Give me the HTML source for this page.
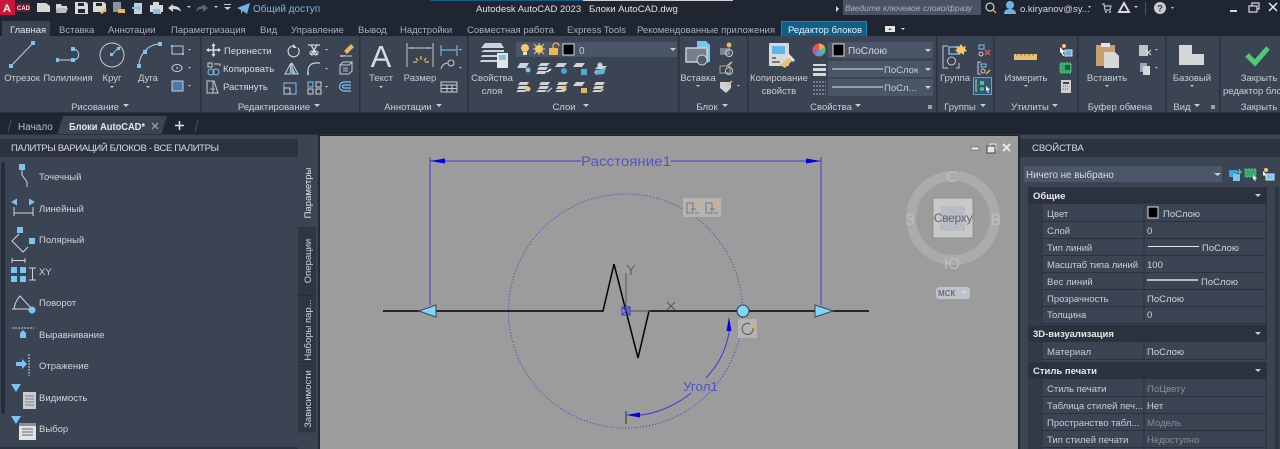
<!DOCTYPE html>
<html lang="ru"><head><meta charset="utf-8"><title>AutoCAD</title>
<style>
html,body{margin:0;padding:0;background:#1f2631;width:1280px;height:449px;overflow:hidden}
svg{display:block;position:absolute;left:0;top:0}
text{font-family:"Liberation Sans",sans-serif;font-size:9.5px;fill:#d0d4da}
.m{text-anchor:middle}
.h{fill:#c9cdd3}
.b{font-weight:bold;fill:#e6e8eb}
.g{fill:#878d97}
.c{fill:#7cc4f0}
.w{fill:#d8d8d8}
.o{fill:#e9b65a}
.dr{fill:#c9cdd3}
</style></head><body>
<svg width="1280" height="449" viewBox="0 0 1280 449" xmlns="http://www.w3.org/2000/svg">
<rect width="1280" height="449" fill="#1f2631"/>
<!-- title bar -->
<rect x="0" y="0" width="15" height="15" fill="#c8163c"/><rect x="15" y="3" width="15" height="9" fill="#7d1030"/>
<text x="3" y="12" style="font-size:11px;font-weight:bold;fill:#fff">A</text>
<text x="17" y="10" style="font-size:6px;font-weight:bold;fill:#eee">CAD</text>
<path class="w" d="M37 3h9l4 3v6H37z"/>
<path class="w" d="M56 4h5l1 2h5v2h-9l-2 4z"/><path d="M58 8h10l-2 5H56z" fill="#b9bcc0"/>
<path class="w" d="M75 2h11l2 2v10H75z"/><rect x="78" y="3" width="6" height="3" fill="#1f2631"/><rect x="78" y="9" width="7" height="4" fill="#1f2631"/>
<path class="w" d="M93 2h11l2 2v8H93z"/><rect x="96" y="3" width="6" height="3" fill="#1f2631"/><path d="M100 13l5-5 2 2-5 4z" class="o"/>
<path d="M113 2h8v10h-8z" fill="#8d929a"/><path d="M118 9h7v4h-7z" class="o"/>
<path d="M134 3h8v11h-8z" fill="#c9ccd0"/><path d="M132 7h6v-2l3 3-3 3V9h-6z" class="c"/>
<path d="M153 2h6v3h-6zM150 5h13v7h-2v2h-8v-2h-3z" class="w"/><rect x="153" y="9" width="7" height="5" fill="#7cc4f0"/>
<path d="M168 8l5-4v2c4 0 7 1 8 6-2-2-4-3-8-3v3z" fill="#d8d8d8"/>
<path d="M187 6h4l-2 2z" fill="#ccc"/>
<path d="M208 8l-5-4v2c-4 0-6 1-7 6 2-2 3-3 7-3v3z" fill="#5d646f"/>
<path d="M214 6h4l-2 2z" fill="#ccc"/>
<path d="M224 4h7v1h-7zM224 7h7l-3.500 3z" fill="#ccc"/>
<path d="M237 8l13-5-3 11-4-3-2 3v-4z" fill="#6fb3e0"/>
<text x="253" y="12" style="fill:#7fb6de;font-size:10px">Общий доступ</text>
<rect x="430" y="0" width="153" height="1" fill="#0e5d8a"/><rect x="583" y="0" width="150" height="1" fill="#d0d0d0"/>
<text x="476" y="12" style="font-size:9.5px;fill:#dfe2e6">Autodesk AutoCAD 2023</text>
<text x="589" y="12" style="font-size:9.5px;fill:#dfe2e6">Блоки AutoCAD.dwg</text>
<path d="M836 6l3 3-3 3z" fill="#ddd"/>
<rect x="843" y="0" width="138" height="15" fill="#4a5363"/>
<text x="845" y="11" textLength="127" style="font-size:8.5px;font-style:italic;fill:#aab0b9">Введите ключевое слово/фразу</text>
<circle cx="990" cy="7" r="4" fill="none" stroke="#c9cdd3" stroke-width="1.200"/><path d="M993 10l3 3" stroke="#d9a75a" stroke-width="1.500"/>
<circle cx="1010" cy="5" r="4" fill="#6fb3e0"/><path d="M1004 14c0-4 3-5 6-5s6 1 6 5z" fill="#6fb3e0"/>
<text x="1020" y="12" style="font-size:9.5px;fill:#d5d8dc">o.kiryanov@sy...</text>
<path d="M1088 6h3l-1.500 2z" fill="#ccc"/>
<path d="M1102 4h2l1 6h5l1-4h-6" fill="none" stroke="#b9bdc3" stroke-width="1.200"/><circle cx="1106" cy="12" r="1" fill="#b9bdc3"/><circle cx="1110" cy="12" r="1" fill="#b9bdc3"/>
<path d="M1124 3l5 9h-10z" fill="none" stroke="#d5d8dc" stroke-width="2"/><path d="M1134 6h4l-2 2z" fill="#ccc"/>
<rect x="1145" y="2" width="1" height="13" fill="#4b5563"/>
<circle cx="1160" cy="8" r="6" fill="#c9cdd3"/><text x="1160" y="11.500" class="m b" style="fill:#333;font-size:9.5px">?</text>
<path d="M1171 7h3l-1.500 2z" fill="#ccc"/>
<rect x="1230" y="10" width="7" height="2" fill="#d5d8dc"/>
<path d="M1249 6h8v6h-8zM1252 6V3h7v6h-2" fill="none" stroke="#d5d8dc" stroke-width="1.200"/>
<path d="M1269 3l8 8M1277 3l-8 8" stroke="#e6e8eb" stroke-width="1.500"/>
<!-- ribbon tabs -->
<rect x="2" y="21" width="48" height="15" fill="#3b4453"/>
<text x="10" y="33" style="fill:#e0e2e5">Главная</text>
<text x="59" y="33" style="fill:#a9aeb6">Вставка</text>
<text x="108" y="33" style="fill:#a9aeb6">Аннотации</text>
<text x="171" y="33" style="fill:#a9aeb6">Параметризация</text>
<text x="260" y="33" style="fill:#a9aeb6">Вид</text>
<text x="291" y="33" style="fill:#a9aeb6">Управление</text>
<text x="358" y="33" style="fill:#a9aeb6">Вывод</text>
<text x="400" y="33" style="fill:#a9aeb6">Надстройки</text>
<text x="467" y="33" style="fill:#a9aeb6">Совместная работа</text>
<text x="567" y="33" style="fill:#a9aeb6">Express Tools</text>
<text x="637" y="33" style="fill:#a9aeb6">Рекомендованные приложения</text>
<rect x="781.500" y="21.500" width="85" height="15" fill="#0f5f88" stroke="#1c86b8"/>
<text x="788" y="33" style="fill:#e6eef3">Редактор блоков</text>
<rect x="885" y="26" width="10" height="6" fill="#e6e6e6"/><path d="M888 30h4l-2-2z" fill="#555"/><path d="M901 28h4l-2 2z" fill="#ddd"/>
<!-- ribbon -->
<rect x="0" y="36" width="1280" height="77" fill="#3b4453"/>
<rect x="0" y="112" width="1280" height="1" fill="#2a313c"/>
<g fill="#2b323e">
<rect x="200" y="36" width="1.500" height="77"/><rect x="359" y="36" width="1.500" height="77"/><rect x="467" y="36" width="1.500" height="77"/><rect x="678" y="36" width="1.500" height="77"/><rect x="747" y="36" width="1.500" height="77"/><rect x="936" y="36" width="1.500" height="77"/><rect x="993" y="36" width="1.500" height="77"/><rect x="1077" y="36" width="1.500" height="77"/><rect x="1165" y="36" width="1.500" height="77"/><rect x="1219" y="36" width="1.500" height="77"/>
</g>
<!-- draw -->
<path d="M11 66L33 43" stroke="#c9cdd3"/><rect x="9" y="64" width="4" height="4" class="c"/><rect x="31" y="41" width="4" height="4" class="c"/>
<path d="M58 60h15M73 49c7 0 8 11 0 11" stroke="#d0d4da" fill="none"/><rect x="56" y="58" width="3" height="4" class="c"/><rect x="71" y="58" width="4" height="4" class="c"/><rect x="71" y="47" width="4" height="4" class="c"/>
<circle cx="112" cy="55" r="12" fill="none" stroke="#c9cdd3"/><path d="M112 55l6-7" stroke="#7cc4f0"/><rect x="110" y="53" width="3" height="3" class="c"/><rect x="117" y="47" width="3" height="3" class="c"/>
<path d="M139 65c1-12 10-21 21-21" fill="none" stroke="#c9cdd3"/><rect x="137" y="64" width="4" height="4" class="c"/><rect x="143" y="50" width="4" height="4" class="c"/><rect x="158" y="42" width="4" height="4" class="c"/>
<text x="22" y="81" class="m h">Отрезок</text><text x="68" y="81" class="m h">Полилиния</text><text x="112" y="81" class="m h">Круг</text><text x="148" y="81" class="m h">Дуга</text>
<path d="M110 86h4l-2 2zM146 86h4l-2 2z" class="dr"/>
<rect x="172" y="46" width="11" height="8" fill="none" stroke="#c9cdd3"/><rect x="171" y="45" width="2" height="2" class="c"/><rect x="182" y="53" width="2" height="2" class="c"/>
<ellipse cx="177" cy="68" rx="5" ry="3.500" fill="none" stroke="#c9cdd3"/><circle cx="177" cy="68" r="1" class="c"/>
<rect x="172" y="81" width="11" height="10" fill="#4f79ac" stroke="#c9cdd3"/>
<path d="M188 49h3l-1.500 1.500zM188 67h3l-1.500 1.500zM188 85h3l-1.500 1.500z" class="dr"/>
<text x="95" y="110" class="m h">Рисование</text><path d="M123 104h6l-3 3z" class="dr"/>
<!-- edit -->
<path d="M208 50h11M213.500 45v11" stroke="#ddd" stroke-width="1.500"/><path d="M213.500 43l-2 3h4zM213.500 57l-2-3h4zM206 50l3-2v4zM221 50l-3-2v4z" fill="#e4e4e4"/>
<rect x="208" y="63" width="4" height="4" fill="none" stroke="#ccc"/><path d="M214 64h6v2" fill="none" stroke="#ccc"/><circle cx="211" cy="72" r="3" fill="none" stroke="#7cc4f0"/><circle cx="216" cy="72" r="3" fill="none" stroke="#7cc4f0"/>
<path d="M207 81h7l4 12h-11zM213 81v12" fill="none" stroke="#ccc"/><path d="M210 89h5" stroke="#7cc4f0"/>
<text x="224" y="54" style="fill:#d8dbdf">Перенести</text><text x="223" y="72" style="fill:#d8dbdf">Копировать</text><text x="223" y="90" style="fill:#d8dbdf">Растянуть</text>
<path d="M295 46a5.500 5.500 0 1 0 3 2" fill="none" stroke="#d0d4da" stroke-width="1.200"/><path d="M293 44v4h4z" fill="#d0d4da"/>
<path d="M291 63l-6 11h5zM292 63l6 11h-6z" fill="none" stroke="#d0d4da"/><path d="M292 66l4 8h-4z" class="c"/>
<rect x="284" y="83" width="12" height="11" fill="none" stroke="#7cc4f0"/><rect x="284" y="88" width="6" height="6" fill="none" stroke="#d0d4da"/>
<path d="M308 45h12M311 45l6 10M317 45l-6 10" stroke="#d0d4da" stroke-width="1.300"/><circle cx="312" cy="53" r="2" fill="none" stroke="#e4e4e4"/><circle cx="316" cy="53" r="2" fill="none" stroke="#e4e4e4"/>
<path d="M308 75v-4c0-5 3-8 8-8h4" fill="none" stroke="#d0d4da" stroke-width="1.200"/><rect x="307" y="72" width="2" height="3" class="c"/>
<rect x="308" y="82" width="5" height="5" fill="none" stroke="#7cc4f0"/><rect x="316" y="82" width="5" height="5" fill="none" stroke="#d0d4da"/><rect x="308" y="89" width="5" height="5" fill="none" stroke="#d0d4da"/><rect x="316" y="89" width="5" height="5" fill="none" stroke="#d0d4da"/>
<path d="M325 49h3l-1.500 1.500zM325 68h3l-1.500 1.500zM325 86h3l-1.500 1.500z" class="dr"/>
<path d="M344 51l7-7 3 3-7 7z" class="o"/><path d="M340 55h5l-1 2h-4z" fill="#e05a4e"/><path d="M340 56h12" stroke="#ccc"/>
<path d="M340 65h9l3-3v9l-3 3h-9zM340 65l3-3h9" fill="none" stroke="#c9cdd3"/><rect x="343" y="67" width="5" height="5" fill="#7cc4f0" opacity=".5"/>
<path d="M351 82h-7a4 4 0 0 0 0 9h7M351 85h-7a1.500 1.500 0 0 0 0 3h7" fill="none" stroke="#7cc4f0" stroke-width="1.200"/>
<text x="274" y="110" class="m h">Редактирование</text><path d="M314 104h6l-3 3z" class="dr"/>
<!-- annotations -->
<text x="381" y="67" class="m" style="font-size:31px;fill:#d9dbde">A</text>
<text x="381" y="81" class="m h">Текст</text><path d="M379 86h4l-2 2z" class="dr"/>
<path d="M407 43v24M433 43v24" stroke="#c9cdd3"/><path d="M408 48h24" stroke="#c9cdd3"/><path d="M409 48l3-1v2zM431 48l-3-1v2z" fill="#ccc"/>
<path d="M413 62h4M416 58l2 3M421 56v4M426 58l-2 3M429 62h-4" stroke="#e9b65a" stroke-width="1.300"/>
<text x="420" y="81" class="m h">Размер</text>
<path d="M441 45v11M457 45v11M441 50h16" stroke="#6fb3e0" stroke-width="1.200"/>
<path d="M441 69c1-4 3-6 7-6" fill="none" stroke="#c9cdd3"/><circle cx="451" cy="63" r="3" fill="none" stroke="#c9cdd3"/>
<path d="M441 82h16v10h-16zM441 85h16M441 88.500h16M447 85v7M452 85v7" fill="none" stroke="#c9cdd3"/>
<path d="M459 49h3l-1.500 1.500zM459 67h3l-1.500 1.500z" class="dr"/>
<text x="408" y="110" class="m h">Аннотации</text><path d="M436 104h6l-3 3z" class="dr"/>
<!-- layers -->
<path d="M485 43h16l3 5h-18l-5 0zM484 50h20v2h-23zM482 55h20v2h-21zM481 60h20v2h-21z" fill="#cfd2d6"/>
<rect x="497" y="53" width="11" height="15" fill="#e2e4e6"/><rect x="499" y="55" width="7" height="5" class="c"/>
<text x="492" y="81" class="m h">Свойства</text><text x="492" y="94" class="m h">слоя</text>
<rect x="516" y="42" width="161" height="15" fill="#4a5568"/>
<circle cx="525" cy="48" r="4" fill="#f3c969"/><rect x="523" y="52" width="4" height="3" fill="#ddd"/>
<circle cx="539" cy="49" r="4" fill="#f3c969"/><path d="M534 44l10 10M544 44l-10 10M533 49h12M539 43v12" stroke="#f3c969"/>
<rect x="549" y="48" width="9" height="7" class="o"/><path d="M553 48v-2a3 3 0 0 1 6 0" fill="none" stroke="#e9b65a" stroke-width="1.300"/>
<rect x="563" y="44" width="11" height="11" fill="#000" stroke="#ddd"/>
<text x="579" y="54" style="fill:#c9cdd3;font-size:10px">0</text>
<path d="M670 48h6l-3 3z" class="dr"/>
<g fill="#cfd2d6">
<path d="M520 63h9l-3 5h-9z"/><path d="M541 63h9l-3 3h-9zM539 67h9l-2 3h-9zM538 71h9l-2 3h-9z"/><path d="M558 63h9l-3 4h-9z"/><path d="M576 63h9l-3 4h-9z"/><path d="M598 66h9l-3 3h-9zM596 70h9l-2 3h-9z"/>
<path d="M520 82h9l-2 3h-9zM519 86h9l-2 3h-9zM518 90h9l-2 2h-9z"/><path d="M541 82h9l-2 3h-9zM540 86h9l-2 3h-9zM538 90h9l-2 2h-9z"/><path d="M559 82h9l-2 3h-9zM558 86h9l-2 3h-9zM557 90h9l-2 2h-9z"/><path d="M576 82h9l-3 4h-9z"/><path d="M596 82h9l-2 3h-9zM595 86h9l-2 3h-9zM594 90h9l-2 2h-9z"/>
</g>
<circle cx="528" cy="70" r="2.500" class="c"/><path d="M547 72l4-3" stroke="#fff" stroke-width="1.500"/><circle cx="564" cy="71" r="3" fill="#45a6d8"/><rect x="581" y="69" width="6" height="6" fill="#55a9d8"/><circle cx="600" cy="65" r="2.500" fill="#cfd2d6"/><path d="M597 70l9-2-2 6-9 1z" fill="#5fb0de"/>
<circle cx="528" cy="89" r="2.500" fill="#f3c969"/><path d="M547 92l5-4" stroke="#7cc4f0" stroke-width="1.500"/><circle cx="564" cy="89" r="2.500" fill="#f3c969"/><rect x="581" y="88" width="6" height="5" class="o"/><path d="M601 87l3 3-3 2z" class="o"/>
<text x="564" y="110" class="m h">Слои</text><path d="M583 104h6l-3 3z" class="dr"/>
<!-- block -->
<path d="M697 41h9l4 4v17h-13z" fill="#7cc4f0"/>
<rect x="686" y="48" width="21" height="14" fill="#777e89" stroke="#c9cdd3" stroke-width="1.500"/><circle cx="702" cy="60" r="5" fill="#555c67" stroke="#c9cdd3"/>
<text x="698" y="81" class="m h">Вставка</text><path d="M696 85h4l-2 2z" class="dr"/>
<rect x="720" y="48" width="10" height="7" fill="#7d848e"/><circle cx="729" cy="53" r="3.500" fill="none" stroke="#ccc"/><circle cx="729" cy="45" r="2.500" class="o"/>
<rect x="720" y="66" width="10" height="7" fill="none" stroke="#aaa"/><circle cx="729" cy="71" r="3.500" fill="none" stroke="#ccc"/><path d="M727 66l5-4" stroke="#e9b65a" stroke-width="1.500"/>
<path d="M720 82h11v6l-5 5-6-5z" fill="#d0d2d5"/><path d="M727 86l5-5" stroke="#e9b65a" stroke-width="1.500"/>
<path d="M737 85h3l-1.500 1.500z" class="dr"/>
<text x="707" y="110" class="m h">Блок</text><path d="M722 104h6l-3 3z" class="dr"/>
<!-- match -->
<rect x="769" y="43" width="20" height="23" rx="1" fill="#d6d8da"/><rect x="772" y="46" width="13" height="8" fill="#5fb5e8"/>
<rect x="772" y="57" width="4" height="2" fill="#777"/><rect x="772" y="61" width="8" height="2" fill="#777"/>
<path d="M780 65l9-7 3 3-7 7z" fill="#e9c271"/><path d="M787 56l6 6 2-2-6-6z" fill="#e6e6e6"/>
<text x="779" y="81" class="m h">Копирование</text><text x="779" y="94" class="m h">свойств</text>
<!-- properties -->
<circle cx="819" cy="50" r="6.500" fill="#e05a4e"/><path d="M819 50V43.500a6.500 6.500 0 0 1 6 4z" fill="#f1a93c"/><path d="M819 50l6-2.500a6.500 6.500 0 0 1-2 7z" fill="#4cc38a"/><path d="M819 50l4 4.500a6.500 6.500 0 0 1-8 .5z" fill="#4a9fe0"/><path d="M819 50l-4 5a6.500 6.500 0 0 1-2-5z" fill="#a060c0"/>
<path d="M813 64h13v2h-13zM813 68h13v3h-13zM813 73h13v3h-13z" fill="#d5d8dc"/>
<path d="M813 82h13M813 86h13M813 90h13M813 94h13" stroke="#aeb2b8" stroke-dasharray="2 1"/>
<rect x="828" y="42" width="105" height="16" fill="#4a5568"/><rect x="828" y="61" width="105" height="16" fill="#4a5568"/><rect x="828" y="79" width="105" height="17" fill="#4a5568"/>
<rect x="833" y="44" width="11" height="12" fill="#000" stroke="#ddd"/>
<text x="848" y="54" style="fill:#d8dbdf;font-size:10px">ПоСлою</text>
<path d="M832 69h51M832 87h51" stroke="#e0e2e5"/>
<text x="884" y="73" style="fill:#c9cdd3">ПоСлою</text><text x="884" y="91" style="fill:#c9cdd3">ПоСл...</text>
<rect x="918" y="61" width="15" height="16" fill="#4a5568"/>
<path d="M925 49h6l-3 3zM925 68h6l-3 3zM925 86h6l-3 3z" class="dr"/>
<text x="831" y="110" class="m h">Свойства</text><path d="M855 104h6l-3 3z" class="dr"/>
<path d="M928 105h4v4h-4z" fill="#9ba0a8"/>
<!-- groups -->
<path d="M948 46h-5v22h5" fill="none" stroke="#c9cdd3"/><path d="M959 63v5h-3" fill="none" stroke="#c9cdd3"/>
<rect x="949" y="47" width="9" height="7" fill="none" stroke="#7cc4f0" stroke-width="1.300"/><circle cx="951.500" cy="61" r="4" fill="none" stroke="#c9cdd3"/>
<path d="M961 44l2 3 3-1-1 3 2 2-3 1 0 3-3-2-2 2-1-3-3-1 2-2-1-3 3 1z" fill="#f3c969"/>
<text x="955" y="81" class="m h">Группа</text>
<rect x="979" y="45" width="5" height="4" fill="none" stroke="#7cc4f0"/><circle cx="981" cy="54" r="2" fill="none" stroke="#ccc"/><path d="M985 50l5 5M990 50l-5 5" stroke="#e05a4e" stroke-width="1.500"/>
<path d="M981 62h-3v12h3" fill="none" stroke="#ccc"/><rect x="981" y="64" width="5" height="3" fill="none" stroke="#7cc4f0"/><circle cx="983" cy="71" r="2" fill="none" stroke="#ccc"/><path d="M986 74l4-4" stroke="#e9b65a" stroke-width="1.500"/>
<rect x="973.500" y="77.500" width="18" height="17" fill="#32566f" stroke="#5ca4d0"/><rect x="980" y="81" width="4" height="4" fill="#4cc38a"/><circle cx="982" cy="89" r="2" fill="#4cc38a"/><path d="M977 80h-1v11h1" fill="none" stroke="#ccc"/><path d="M986 86l4 4-2 0 1 3-1 0-1-3-1 1z" fill="#fff"/>
<text x="960" y="110" class="m h">Группы</text><path d="M980 104h6l-3 3z" class="dr"/>
<!-- utilities -->
<rect x="1014" y="54" width="23" height="6" fill="#e9c271"/><path d="M1017 54v2M1021 54v2M1025 54v2M1029 54v2M1033 54v2" stroke="#8a6f3c"/>
<text x="1026" y="81" class="m h">Измерить</text><path d="M1024 85h4l-2 2z" class="dr"/>
<path d="M1060 47l5 5-2 0 1 4-1 0-2-4-1 1z" fill="#fff"/><rect x="1065" y="50" width="7" height="6" fill="#5fb0de" stroke="#ddd"/><circle cx="1064" cy="46" r="2" fill="#f3c969"/>
<rect x="1060" y="63" width="11" height="10" fill="#3da66a" stroke="#4cc38a" stroke-dasharray="2 1"/><rect x="1065" y="65" width="5" height="5" fill="#1d5f40"/>
<rect x="1061" y="80" width="10" height="13" fill="#ccd0d4"/><rect x="1063" y="82" width="6" height="2" fill="#444"/><path d="M1063 86h6M1063 89h6" stroke="#666" stroke-dasharray="1 1"/>
<text x="1030" y="110" class="m h">Утилиты</text><path d="M1052 104h6l-3 3z" class="dr"/>
<!-- clipboard -->
<rect x="1096" y="45" width="19" height="21" fill="#c9a16f"/><rect x="1101" y="43" width="9" height="4" fill="#e4e4e4"/>
<path d="M1104 52h11l4 4v12h-15z" fill="#d8d8d8"/>
<text x="1107" y="81" class="m h">Вставить</text><path d="M1105 85h4l-2 2z" class="dr"/>
<rect x="1139" y="45" width="9" height="11" fill="#c0c4c9"/><path d="M1146 50l5 5M1151 50l-5 5" stroke="#ddd"/>
<rect x="1140" y="63" width="7" height="9" fill="#a0a5ac"/><rect x="1143" y="66" width="7" height="9" fill="#d8d8d8"/>
<path d="M1155 49h3l-1.500 1.500zM1155 67h3l-1.500 1.500z" class="dr"/>
<text x="1120" y="110" class="m h">Буфер обмена</text>
<!-- view -->
<path d="M1179 45h13v9h12v11h-25z" fill="#d5d6d8"/>
<text x="1192" y="81" class="m h">Базовый</text><path d="M1190 85h4l-2 2z" class="dr"/>
<text x="1182" y="110" class="m h">Вид</text><path d="M1194 104h6l-3 3z" class="dr"/><path d="M1211 105h4v4h-4z" fill="#9ba0a8"/>
<!-- close -->
<path d="M1247 55l8 8 13-15" fill="none" stroke="#4ecb79" stroke-width="5"/>
<text x="1259" y="81" class="m h">Закрыть</text><text x="1223" y="94" class="h">редактор бло</text><text x="1259" y="110" class="m h">Закрыть</text>
<!-- doc tabs -->
<path d="M8 132l3-12M195 132l3-12" stroke="#4b5563"/>
<text x="18" y="130" style="fill:#b9bdc3;font-size:10px">Начало</text>
<path d="M57 135l6-19h104l-6 19z" fill="#3b4453"/>
<text x="69" y="130" class="b" textLength="76" lengthAdjust="spacingAndGlyphs" style="font-size:10px">Блоки AutoCAD*</text>
<path d="M152 123l6 6M158 123l-6 6" stroke="#9ba0a8" stroke-width="1.300"/>
<path d="M175 125.500h9M179.500 121v9" stroke="#e0e2e5" stroke-width="1.500"/>
<rect y="134" width="1280" height="1" fill="#2b323e"/>
<!-- left palette -->
<rect x="0" y="135" width="318" height="314" fill="#3b4453"/>
<rect x="0" y="139" width="298" height="18" fill="#2c333f"/>
<rect x="0" y="447" width="298" height="2" fill="#2c333f"/>
<rect x="1" y="162" width="4" height="252" rx="2" fill="#262d38"/>
<text x="11" y="151" textLength="208" style="font-size:9.5px;fill:#d8dbdf">ПАЛИТРЫ ВАРИАЦИЙ БЛОКОВ - ВСЕ ПАЛИТРЫ</text>
<rect x="298" y="227" width="18" height="68" fill="#2f3642"/><rect x="298" y="295.500" width="18" height="69" fill="#2f3642"/><rect x="298" y="365.500" width="18" height="67" fill="#2f3642"/>
<path d="M298 295.500h18M298 365.500h18" stroke="#262d38"/>
<text transform="translate(311 193) rotate(-90)" class="m" style="fill:#e0e2e5">Параметры</text>
<text transform="translate(311 261) rotate(-90)" class="m">Операции</text>
<text transform="translate(311 330) rotate(-90)" class="m">Наборы пар...</text>
<text transform="translate(311 399) rotate(-90)" class="m">Зависимости</text>
<text x="39" y="180">Точечный</text><text x="39" y="212">Линейный</text><text x="39" y="243">Полярный</text><text x="39" y="275">XY</text><text x="39" y="306">Поворот</text><text x="39" y="338">Выравнивание</text><text x="39" y="369">Отражение</text><text x="39" y="401">Видимость</text><text x="39" y="432">Выбор</text>
<rect x="19" y="164" width="6" height="6" class="c"/><path d="M22 170v5l5 7v5" fill="none" stroke="#d0d4da"/>
<path d="M11 202l6-3.500v7zM35 202l-6-3.500v7z" class="c"/><path d="M14 207v9M33 207v9M14 213h19" fill="none" stroke="#d0d4da"/>
<rect x="17" y="227" width="6" height="6" class="c"/><rect x="29" y="238" width="6" height="6" class="c"/><path d="M19 234l-7 7 11 11 5-5" fill="none" stroke="#d0d4da"/>
<path d="M12 258v5M25 258v5M12 260.500h13" stroke="#d0d4da"/>
<rect x="11" y="267" width="6" height="6" class="c"/><rect x="20" y="267" width="6" height="6" class="c"/><rect x="11" y="276" width="6" height="6" class="c"/><rect x="20" y="276" width="6" height="6" class="c"/>
<path d="M29 268h7M29 280h7M32.500 268v12" stroke="#d0d4da"/>
<path d="M14 309c1-6 3-10 6-13l12 13" fill="none" stroke="#d0d4da"/><path d="M12 309h18" stroke="#d0d4da"/><circle cx="32" cy="310" r="3.500" class="c"/>
<path d="M12 328h22" stroke="#d0d4da" stroke-dasharray="2 1"/><path d="M20 338v-5l3-3 3 3v5z" class="c"/>
<path d="M29 354v22" stroke="#d0d4da" stroke-dasharray="2 1"/><path d="M16 362h6v-3l5 5-5 5v-3h-6z" class="c"/>
<path d="M11 384h10l-5 8z" class="c"/><rect x="23" y="392" width="13" height="17" fill="#c9ccd0"/><path d="M25 396h9M25 399h9M25 402h9M25 405h9" stroke="#7b8087"/>
<path d="M11 416h10l-5 8z" class="c"/><rect x="19" y="423" width="17" height="17" fill="#e0e2e4"/><rect x="19" y="423" width="17" height="3" fill="#8c9198"/><path d="M22 429h11M22 432h11M22 435h11" stroke="#666"/>
<!-- canvas -->
<rect x="320" y="136" width="698" height="313" fill="#9c9c9c"/>
<g fill="none" stroke="#3a3ad8">
<path d="M430 157V305M821 157V305"/>
<path d="M430 161H581M671 161H821"/>
<path d="M730 327C726 355 715 368 706 378M691 393C677 405 655 414 640 415"/>
<path d="M626 411v13" stroke="#333"/>
</g>
<path d="M430 161l15-2.500v5zM821 161l-15-2.500v5zM729 317l-2.500 14h5zM626 415l14-2.500v5z" fill="#0000e0"/>
<text x="581" y="166" textLength="90" lengthAdjust="spacingAndGlyphs" style="fill:#5252cc;font-size:14px">Расстояние1</text>
<text x="683" y="391" textLength="35" lengthAdjust="spacingAndGlyphs" style="fill:#5252cc;font-size:13px">Угол1</text>
<circle cx="625.500" cy="311" r="117" fill="none" stroke="#3c3cc8" stroke-width="1" stroke-dasharray="1 2"/>
<path d="M383 311H603L614 264L638 358L649 311H869" fill="none" stroke="#000" stroke-width="1.500"/>
<path d="M626 273V311H650" fill="none" stroke="#555"/>
<path d="M627 265l4 5 4-5M631 270v5M667 302l8 8M675 302l-8 8" fill="none" stroke="#555"/>
<rect x="622" y="307" width="8" height="8" fill="none" stroke="#3a3ad8"/><path d="M622 307l8 8M630 307l-8 8" stroke="#3a3ad8"/>
<path d="M419 311l17-6v12z" fill="#7ed6f8" stroke="#445"/><path d="M833 311l-18-6v12z" fill="#7ed6f8" stroke="#445"/>
<circle cx="743" cy="311" r="6" fill="#7ed6f8" stroke="#334"/>
<rect x="683" y="198" width="38" height="19" fill="#b4b4b4"/>
<path d="M687 203h6v10h-6zM691 209h5M695 213h4M706 203h6v10h-6zM710 209h5M714 213h4" fill="none" stroke="#777"/><path d="M696 205l2-3 2 3-2 2zM715 205l2-3 2 3-2 2z" fill="#eab04c"/>
<rect x="738" y="319" width="19" height="19" fill="#b4b4b4"/>
<path d="M750 324a5.500 5.500 0 1 0 3 4" fill="none" stroke="#666" stroke-width="1.200"/><path d="M751 326l2-3 2 3-2 2z" fill="#eab04c"/>
<!-- viewport controls -->
<rect x="971" y="147" width="8" height="3" fill="#e6e6e6" stroke="#444" stroke-width=".5"/>
<path d="M987 146h8v7h-8z" fill="#e6e6e6" stroke="#444"/><path d="M990 146v-2h6v6" fill="none" stroke="#e6e6e6"/>
<path d="M1003 144l7 7M1010 144l-7 7" stroke="#e8e8e8" stroke-width="2"/>
<!-- viewcube -->
<circle cx="953" cy="218" r="42" fill="none" stroke="#ababab" stroke-width="10"/>
<rect x="933" y="198" width="40" height="40" fill="#c9c9c9" stroke="#8e8e8e"/><rect x="940" y="206" width="25" height="25" fill="#b8bcc4"/>
<text x="953" y="222" class="m" style="font-size:12px;fill:#666;letter-spacing:-.3px">Сверху</text>
<text x="952" y="182" class="m" style="fill:#bebebe;font-size:16px">С</text><text x="910" y="225" class="m" style="fill:#bebebe;font-size:16px">З</text><text x="996" y="225" class="m" style="fill:#bebebe;font-size:16px">В</text><text x="952" y="269" class="m" style="fill:#bebebe;font-size:16px">Ю</text>
<rect x="936" y="287" width="34" height="12" rx="3" fill="#bfc3cc"/>
<text x="938" y="296" style="font-size:8px;fill:#6a6f78;font-weight:bold">МСК</text><path d="M961 291h6l-3 3z" fill="#d5d8dd"/>
<!-- right props -->
<rect x="1020" y="135" width="260" height="314" fill="#3b4453"/>
<rect x="1020" y="139" width="260" height="18" fill="#2c333f"/>
<text x="1032" y="151" style="fill:#d8dbdf;font-size:9.5px">СВОЙСТВА</text>
<rect x="1024" y="166" width="198" height="16" fill="#4b5668"/>
<text x="1026" y="178" style="fill:#d8dbdf;font-size:9.8px">Ничего не выбрано</text>
<path d="M1214 173h7l-3.500 3z" class="dr"/>
<rect x="1229" y="170" width="8" height="7" fill="#4a9fd8"/><rect x="1233" y="174" width="7" height="7" fill="#7cc4f0"/><path d="M1237 172h5M1239.500 169v6" stroke="#4ecb79" stroke-width="1.500"/>
<rect x="1245" y="169" width="11" height="8" fill="#3da66a" stroke="#4cc38a" stroke-dasharray="2 1"/><path d="M1253 175l4 4-2 0 1 2-1 0-1-2-1 1z" fill="#fff"/>
<path d="M1263 171l3 3-1 0 1 3-2-2-1 1z" fill="#fff"/><rect x="1266" y="174" width="8" height="6" fill="#7cc4f0" stroke="#ddd"/><circle cx="1266" cy="170" r="2" fill="#f3c969"/>
<rect x="1275" y="187" width="4" height="262" fill="#2f3642"/>
<g fill="#2b323e">
<rect x="1028" y="187" width="239" height="17"/><rect x="1028" y="325" width="239" height="17"/><rect x="1028" y="362" width="239" height="17"/>
<rect x="1028" y="204" width="14" height="122" fill="#333b48"/><rect x="1028" y="342" width="14" height="20" fill="#333b48"/><rect x="1028" y="379" width="14" height="70" fill="#333b48"/>
</g>
<g stroke="#2b323e" fill="none">
<path d="M1042 204v122M1042 342v17M1042 379v70M1144 204v122M1144 342v17M1144 379v70M1266 204v122M1266 342v17M1266 379v70"/>
<path d="M1042 221.500h224M1042 238.500h224M1042 255.500h224M1042 272.500h224M1042 289.500h224M1042 306.500h224M1042 323.500h224M1042 359.500h224M1042 396.500h224M1042 413.500h224M1042 430.500h224M1042 447.500h224"/>
</g>
<text x="1033" y="199" class="b">Общие</text><text x="1033" y="337" class="b">3D-визуализация</text><text x="1033" y="374" class="b">Стиль печати</text>
<path d="M1255 194h6l-3 3zM1255 332h6l-3 3zM1255 369h6l-3 3z" class="dr"/>
<text x="1047" y="217" class="h">Цвет</text><text x="1047" y="234" class="h">Слой</text><text x="1047" y="251" class="h">Тип линий</text><text x="1047" y="268" class="h" textLength="91">Масштаб типа линий</text><text x="1047" y="285" class="h">Вес линий</text><text x="1047" y="302" class="h">Прозрачность</text><text x="1047" y="318" class="h">Толщина</text>
<text x="1047" y="355" class="h">Материал</text>
<text x="1047" y="392" class="h">Стиль печати</text><text x="1047" y="409" class="h">Таблица стилей печ...</text><text x="1047" y="426" class="h">Пространство табл...</text><text x="1047" y="443" class="h">Тип стилей печати</text>
<rect x="1148" y="207" width="10" height="11" fill="#000" stroke="#ddd"/>
<text x="1163" y="217">ПоСлою</text><text x="1147" y="234">0</text>
<path d="M1148 246.500h51" stroke="#e0e2e5"/><text x="1202" y="251">ПоСлою</text>
<text x="1147" y="268">100</text>
<path d="M1147 280h51" stroke="#e0e2e5" stroke-width="1.500"/><text x="1201" y="285">ПоСлою</text>
<text x="1147" y="302">ПоСлою</text><text x="1147" y="318">0</text><text x="1147" y="355">ПоСлою</text>
<text x="1147" y="392" class="g">ПоЦвету</text><text x="1147" y="409">Нет</text><text x="1147" y="426" class="g">Модель</text><text x="1147" y="443" class="g">Недоступно</text>
<rect x="1018" y="136" width="2" height="313" fill="#232a35"/>
<rect x="318" y="136" width="2" height="313" fill="#232a35"/>
</svg>
</body></html>
